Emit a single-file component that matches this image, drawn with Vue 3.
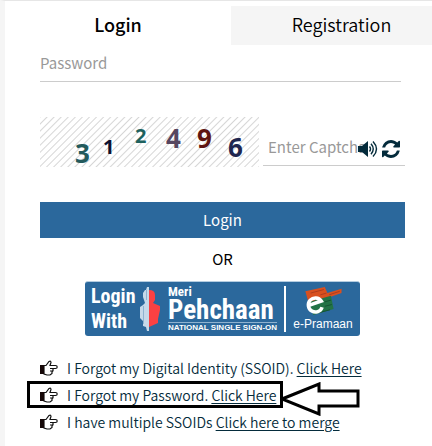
<script setup>
import { ref } from 'vue'

const password = ref('')
const captcha = ref('')

const digits = [
  { char: '3', x: 35, y: 46, size: 26, color: '#235a5c' },
  { char: '1', x: 63, y: 37, size: 20, color: '#0c1030' },
  { char: '2', x: 95, y: 26, size: 20, color: '#1f625e' },
  { char: '4', x: 126, y: 31, size: 26, color: '#56465f' },
  { char: '9', x: 157, y: 31, size: 26, color: '#5e1512' },
  { char: '6', x: 188, y: 40, size: 26, color: '#20264f' },
]

const helpLinks = [
  { text: 'I Forgot my Digital Identity (SSOID).', link: 'Click Here' },
  { text: 'I Forgot my Password.', link: 'Click Here', marked: true },
  { text: 'I have multiple SSOIDs', link: 'Click here to merge' },
]
</script>

<template>
  <main class="panel">
    <nav class="tabs">
      <button type="button" class="tab active">Login</button>
      <button type="button" class="tab other">Registration</button>
    </nav>

    <form class="form" @submit.prevent>
      <input v-model="password" class="field password" type="password" placeholder="Password" aria-label="Password" />

      <div class="captcha-row">
        <svg class="captcha" viewBox="0 0 219 50" role="img" aria-label="Captcha">
          <text
            v-for="d in digits"
            :key="d.char"
            :x="d.x"
            :y="d.y"
            :font-size="d.size"
            :fill="d.color"
          >{{ d.char }}</text>
        </svg>
        <div class="captcha-entry">
          <input v-model="captcha" class="field code" type="text" placeholder="Enter Captcha" aria-label="Enter Captcha" />
          <div class="captcha-tools">
            <button type="button" class="tool" aria-label="Play captcha">
              <svg width="20" height="18" viewBox="0 0 20 18">
                <path d="M0 6h4l6-5v16l-6-5H0z" fill="#042b3b" />
                <path d="M11.5 6.500q2 2.500 0 5M13 3.800q4.500 5.200 0 10.400M15 1.500q7 7.500 0 15" fill="none" stroke="#042b3b" stroke-width="1.400" />
              </svg>
            </button>
            <button type="button" class="tool" aria-label="Refresh captcha">
              <svg width="18" height="18" viewBox="0 0 1536 1536">
                <path fill="#042b3b" d="M1511 928q0 5-1 7-64 268-268 434.500T764 1536q-146 0-282.500-55T238 1324l-129 129q-19 19-45 19t-45-19-19-45V960q0-26 19-45t45-19h448q26 0 45 19t19 45-19 45l-137 137q71 66 161 102t187 36q134 0 250-65t186-179q11-17 53-117 8-23 30-23h192q13 0 22.500 9.500t9.500 22.500zm25-800v448q0 26-19 45t-45 19h-448q-26 0-45-19t-19-45 19-45l138-138Q969 256 768 256q-134 0-250 65T332 500q-11 17-53 117-8 23-30 23H50q-13 0-22.500-9.500T18 608v-7q65-268 270-434.500T768 0q146 0 284 55.500T1297 212l130-129q19-19 45-19t45 19 19 45z" />
              </svg>
            </button>
          </div>
        </div>
      </div>

      <button type="submit" class="submit">Login</button>
    </form>

    <p class="or">OR</p>

    <a class="sso" href="#" aria-label="Login with Meri Pehchaan or e-Pramaan">
      <span class="sso-login"><span>Login</span><span>With</span></span>
      <svg class="person" width="20" height="44" viewBox="0 0 20 44">
        <path d="M9 0v44H7l-1-4-3-1v-5l-3-3V20l3-2 2-2-1-3-1-3V6l2-3h1l1-3z" fill="#c6d9e9" />
        <path d="M3.500 19v18M6.500 3v10" stroke="#8fb2d0" stroke-width="1" fill="none" />
        <path d="M9 3q6 0 6 5v5l-2 3 7 3v4l-2 9v4l-9 4z" fill="#fb4142" />
      </svg>
      <span class="pehchaan">
        <span class="meri">Meri</span>
        <span class="name">Pehchaan</span>
        <span class="tagline">NATIONAL SINGLE SIGN-ON</span>
      </span>
      <span class="pramaan">
        <svg width="46" height="34" viewBox="0 0 46 34">
          <path d="M3 6l22-5 3 7 16-5v5l-17 6-2 5-18 1z" fill="#d9501f" />
          <path d="M7 18l25-7 3 15-23 7z" fill="#237345" />
          <path d="M9 8l15-4M20 10l7-2M30 10l12-4" stroke="#a93a1c" stroke-width="1" />
          <path d="M25 18l7-2M25 23l8-2M15 31l16-4" stroke="#12502f" stroke-width="1" />
          <path d="M7 22l14-5A8 8 0 1 0 22 24" fill="none" stroke="#fff" stroke-width="4" />
        </svg>
        <span>e-Pramaan</span>
      </span>
    </a>

    <ul class="help">
      <li v-for="item in helpLinks" :key="item.text" class="help-row">
        <svg class="hand" width="18" height="16" viewBox="0 0 18 16">
          <path d="M4 5.500h2l3-4q2-1 2 1l-1 3h5.500q1.700 0 1.700 1.500t-1.700 1.500H13v2.500l-1 .5v2l-2 1.500H7l-3-1z" fill="#fff" stroke="#111" stroke-width="1.200" />
          <path d="M13 8.500h-3M13 11h-3" stroke="#111" stroke-width="1" />
          <path d="M0 5h4v9H0z" fill="#150707" />
        </svg>
        <span>{{ item.text }} <a href="#">{{ item.link }}</a></span>
        <span v-if="item.marked" class="marker"></span>
        <svg v-if="item.marked" class="arrow" width="80" height="34" viewBox="0 0 80 34">
          <path d="M2 17L39 2v7h39v15H39v8z" fill="#fff" stroke="#000" stroke-width="3" />
        </svg>
      </li>
    </ul>
  </main>
</template>

<style>
body {
  margin: 0;
  background: #fff;
}
</style>

<style scoped>
.panel {
  box-sizing: border-box;
  min-height: 100vh;
  border-top: 1px solid #e6e6e6;
  border-left: 5px solid #f5f5f5;
  font-family: "Noto Sans CJK SC", "Noto Sans", sans-serif;
  font-size: 15px;
  color: #042b3b;
  overflow: hidden;
}

button,
input {
  font: inherit;
  border: 0;
  border-radius: 0;
  padding: 0;
  background: none;
}

.tabs {
  display: grid;
  grid-template-columns: 226fr 201fr;
  padding-top: 5px;
}

.tab {
  height: 39px;
  font-size: 18px;
  line-height: 34px;
  padding-bottom: 4px;
  color: #000;
}

.active {
  font-weight: 500;
}

.other {
  padding-left: 20px;
  background: #f5f5f5;
  font-weight: 350;
}

.form {
  display: flex;
  flex-direction: column;
  padding: 0 27px 0 35px;
}

.field {
  box-sizing: border-box;
  border-bottom: 1px solid #ccc;
  outline: 0;
  color: #333;
}

.field::placeholder {
  color: #999;
  opacity: 1;
}

.password {
  height: 37px;
  margin-right: 4px;
  padding-bottom: 2px;
}

.captcha-row {
  display: flex;
  gap: 4px;
  margin-top: 35px;
}

.captcha {
  flex: 219;
  height: 50px;
  background: repeating-linear-gradient(135deg, #d6d6d6 0, #fff 1px, #fff 4px, #d6d6d6 5px);
  font-family: "Open Sans", sans-serif;
  font-weight: 700;
}

.captcha-entry {
  position: relative;
  flex: 142;
  min-width: 0;
}

.code {
  width: 100%;
  height: 49px;
  padding: 10px 0 0 5px;
}

.captcha-tools {
  position: absolute;
  right: 5px;
  bottom: 9px;
  display: flex;
  gap: 4px;
}

.tool {
  display: flex;
}

.submit {
  height: 36px;
  margin-top: 35px;
  background: #2b689c;
  color: #fff;
  line-height: 36px;
}

.or {
  margin: 10px 0 0 8px;
  text-align: center;
  line-height: 22px;
  color: #000;
}

.sso {
  box-sizing: border-box;
  display: flex;
  width: 275px;
  height: 55px;
  margin: 11px auto 0 80px;
  border-top: 1px solid #b5cde0;
  border-radius: 3px;
  background: #2b689c;
  color: #fff;
  text-decoration: none;
  font-family: "Liberation Sans Narrow", "Roboto Condensed", "Liberation Sans", sans-serif;
  font-weight: 700;
}

.sso-login {
  display: flex;
  flex-direction: column;
  width: 49px;
  padding: 2px 0 0 6px;
  font-size: 20px;
  line-height: 25px;
}

.person {
  margin-top: 5px;
}

.pehchaan {
  display: flex;
  flex-direction: column;
  width: 109px;
  margin-left: 8px;
  padding-top: 4px;
  white-space: nowrap;
}

.meri {
  font-size: 13px;
  line-height: 12px;
}

.name {
  font-size: 27px;
  line-height: 24px;
  border-bottom: 1px solid #8fb2d0;
}

.tagline {
  font-family: "Liberation Sans", sans-serif;
  font-size: 8px;
  line-height: 10px;
}

.pramaan {
  display: flex;
  flex: 1;
  flex-direction: column;
  align-items: center;
  margin: 4px 0 4px 7px;
  border-left: 2px solid #fff;
  font-family: "Liberation Sans", sans-serif;
  font-size: 12px;
  font-weight: 400;
  line-height: 16px;
}

.help {
  margin: 18px 0 0;
  padding: 0 0 0 35px;
  list-style: none;
  font-size: 14px;
  font-weight: 350;
}

.help-row {
  position: relative;
  display: flex;
  align-items: center;
  width: max-content;
  height: 27px;
  gap: 9px;
}

.help-row a {
  color: inherit;
  text-underline-offset: 2px;
}

.marker {
  position: absolute;
  inset: 0 -7px 0 -13px;
  border: 3px solid #000;
  pointer-events: none;
}

.arrow {
  position: absolute;
  left: calc(100% + 4px);
  top: 1px;
}
</style>
